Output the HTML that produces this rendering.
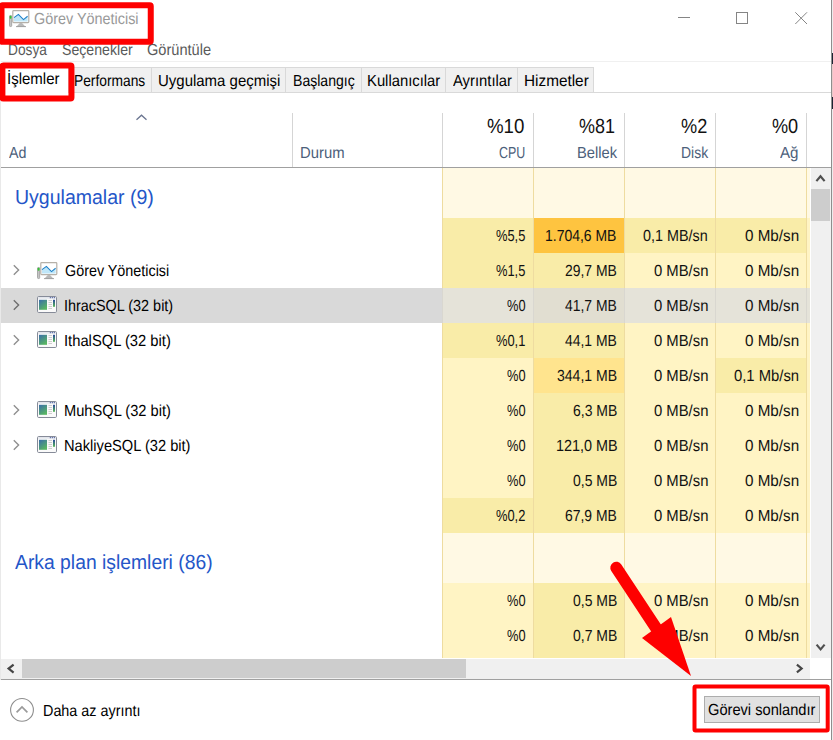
<!DOCTYPE html>
<html><head><meta charset="utf-8">
<style>
html,body{margin:0;padding:0;}
body{width:833px;height:740px;position:relative;overflow:hidden;background:#fff;font-family:"Liberation Sans",sans-serif;font-size:15px;color:#000;text-rendering:geometricPrecision;}
.abs{position:absolute;}
.t{position:absolute;white-space:nowrap;transform-origin:0 0;}
</style></head><body>
<div class="abs" style="left:831px;top:0;width:1px;height:740px;background:#8e8e8e;"></div>
<div class="abs" style="left:832px;top:0;width:1px;height:740px;background:#ececec;"></div>
<div class="abs" style="left:832px;top:53px;width:1px;height:11px;background:#1c2433;"></div>
<div class="abs" style="left:832px;top:64px;width:1px;height:33px;background:#e9c9c9;"></div>
<div class="abs" style="left:832px;top:97px;width:1px;height:12px;background:#1c2433;"></div>
<div class="abs" style="left:0;top:93px;width:1px;height:587px;background:#e9e9e9;"></div>

<svg class="abs" style="left:9px;top:10px;" width="21" height="18" viewBox="0 0 21 18">
<rect x="0.5" y="5.5" width="2.2" height="11" rx="0.8" fill="#c4c4c4" stroke="#9a9a9a" stroke-width="0.8"/>
<rect x="0.7" y="5.8" width="1.8" height="3" rx="0.8" fill="#35c435"/>
<rect x="3.8" y="0.6" width="16" height="12" rx="0.8" fill="#ffffff" stroke="#b5b0a8" stroke-width="1.2"/>
<path d="M5 7.600 L9.400 4.400 L14.500 9.600 L18.600 6.300 L18.600 11.400 L5 11.400 Z" fill="#bfe6f8"/>
<path d="M5 7.600 L9.400 4.400 L14.500 9.600 L18.600 6.300" fill="none" stroke="#1e80c8" stroke-width="1.1"/>
<path d="M10.800 13 L13 13 L16.500 16.800 L7.300 16.800 Z" fill="#b9b9b9"/>
<rect x="7" y="16.200" width="10" height="0.9" fill="#9a9a9a"/>
</svg>
<div class="t" id="title" style="left:34.28px;top:9px;font-size:16px;line-height:21px;transform:scaleX(0.8996);color:#999;">Görev Yöneticisi</div>
<svg class="abs" style="left:670px;top:0;" width="160" height="36" viewBox="0 0 160 36">
<path d="M8 17.500 H20" stroke="#858585" stroke-width="1" fill="none"/>
<rect x="66.500" y="12.500" width="11" height="11" stroke="#858585" stroke-width="1" fill="none"/>
<path d="M125.300 12.300 L137 24 M137 12.300 L125.300 24" stroke="#858585" stroke-width="1" fill="none"/>
</svg>
<div class="t" id="m1" style="left:8.00px;top:40px;font-size:16px;line-height:21px;transform:scaleX(0.8571);color:#5a5a5a;">Dosya</div>
<div class="t" id="m2" style="left:61.84px;top:40px;font-size:16px;line-height:21px;transform:scaleX(0.8833);color:#5a5a5a;">Seçenekler</div>
<div class="t" id="m3" style="left:147.42px;top:40px;font-size:16px;line-height:21px;transform:scaleX(0.9122);color:#5a5a5a;">Görüntüle</div>
<div class="abs" style="left:1px;top:61px;width:830px;height:1px;background:#f0f0f0;"></div>
<div class="abs" style="left:1px;top:92px;width:830px;height:1px;background:#d9d9d9;"></div>
<div class="abs" style="left:68px;top:67px;width:526px;height:25px;background:#f0f0f0;border:1px solid #d9d9d9;border-bottom:none;box-sizing:border-box;"></div>
<div class="abs" style="left:151px;top:68px;width:1px;height:24px;background:#d9d9d9;"></div>
<div class="abs" style="left:285px;top:68px;width:1px;height:24px;background:#d9d9d9;"></div>
<div class="abs" style="left:361px;top:68px;width:1px;height:24px;background:#d9d9d9;"></div>
<div class="abs" style="left:445px;top:68px;width:1px;height:24px;background:#d9d9d9;"></div>
<div class="abs" style="left:517px;top:68px;width:1px;height:24px;background:#d9d9d9;"></div>
<div class="abs" style="left:2px;top:65px;width:67px;height:28px;background:#fff;border:1px solid #d9d9d9;border-bottom:none;box-sizing:border-box;"></div>
<div class="t" id="tab1" style="left:7.48px;top:69px;font-size:16px;line-height:21px;transform:scaleX(0.9379);color:#000;">İşlemler</div>
<div class="t" id="tab2" style="left:74.00px;top:71px;font-size:16px;line-height:21px;transform:scaleX(0.8614);color:#000;">Performans</div>
<div class="t" id="tab3" style="left:157.56px;top:71px;font-size:16px;line-height:21px;transform:scaleX(0.9360);color:#000;">Uygulama geçmişi</div>
<div class="t" id="tab4" style="left:292.64px;top:71px;font-size:16px;line-height:21px;transform:scaleX(0.8786);color:#000;">Başlangıç</div>
<div class="t" id="tab5" style="left:366.84px;top:71px;font-size:16px;line-height:21px;transform:scaleX(0.9256);color:#000;">Kullanıcılar</div>
<div class="t" id="tab6" style="left:452.72px;top:71px;font-size:16px;line-height:21px;transform:scaleX(0.9255);color:#000;">Ayrıntılar</div>
<div class="t" id="tab7" style="left:523.84px;top:71px;font-size:16px;line-height:21px;transform:scaleX(0.9582);color:#000;">Hizmetler</div>
<div class="abs" style="left:1px;top:167px;width:830px;height:1px;background:#a0a0a0;"></div>
<div class="abs" style="left:292px;top:113px;width:1px;height:54px;background:#d5d5d5;"></div>
<div class="abs" style="left:442px;top:113px;width:1px;height:54px;background:#d5d5d5;"></div>
<div class="abs" style="left:533px;top:113px;width:1px;height:54px;background:#d5d5d5;"></div>
<div class="abs" style="left:624px;top:113px;width:1px;height:54px;background:#d5d5d5;"></div>
<div class="abs" style="left:715px;top:113px;width:1px;height:54px;background:#d5d5d5;"></div>
<div class="abs" style="left:806px;top:113px;width:1px;height:54px;background:#d5d5d5;"></div>
<svg class="abs" style="left:134px;top:113px;" width="16" height="10" viewBox="0 0 16 10"><path d="M2.500 6.800 L7.500 2.200 L12.500 6.800" fill="none" stroke="#6a7590" stroke-width="1.3"/></svg>
<div class="t" id="hAd" style="left:8.50px;top:143px;font-size:16px;line-height:21px;transform:scaleX(0.8917);color:#4c607a;">Ad</div>
<div class="t" id="hDurum" style="left:300.20px;top:143px;font-size:16px;line-height:21px;transform:scaleX(0.9275);color:#4c607a;">Durum</div>
<div class="t" id="hp0" style="left:487.14px;top:114px;font-size:20.4px;line-height:27px;transform:scaleX(0.9157);color:#111;">%10</div>
<div class="t" id="hl0" style="left:499.14px;top:143px;font-size:16px;line-height:21px;transform:scaleX(0.7769);color:#4c607a;">CPU</div>
<div class="t" id="hp1" style="left:578.64px;top:114px;font-size:20.4px;line-height:27px;transform:scaleX(0.8809);color:#111;">%81</div>
<div class="t" id="hl1" style="left:577.20px;top:143px;font-size:16px;line-height:21px;transform:scaleX(0.9179);color:#4c607a;">Bellek</div>
<div class="t" id="hp2" style="left:681.00px;top:114px;font-size:20.4px;line-height:27px;transform:scaleX(0.8904);color:#111;">%2</div>
<div class="t" id="hl2" style="left:681.00px;top:143px;font-size:16px;line-height:21px;transform:scaleX(0.8710);color:#4c607a;">Disk</div>
<div class="t" id="hp3" style="left:771.78px;top:114px;font-size:20.4px;line-height:27px;transform:scaleX(0.8877);color:#111;">%0</div>
<div class="t" id="hl3" style="left:780.28px;top:143px;font-size:16px;line-height:21px;transform:scaleX(0.9468);color:#4c607a;">Ağ</div>
<div class="abs" style="left:807px;top:168px;width:3px;height:490px;background:#FFF4C4;"></div>
<div class="abs" style="left:807px;top:168px;width:3px;height:50px;background:#FFF9E4;"></div>
<div class="abs" style="left:443px;top:168px;width:90px;height:50px;background:#FFF9E4;"></div>
<div class="abs" style="left:534px;top:168px;width:90px;height:50px;background:#FFF9E4;"></div>
<div class="abs" style="left:625px;top:168px;width:90px;height:50px;background:#FFF9E4;"></div>
<div class="abs" style="left:716px;top:168px;width:90px;height:50px;background:#FFF9E4;"></div>
<div class="abs" style="left:807px;top:533px;width:3px;height:50px;background:#FFF9E4;"></div>
<div class="abs" style="left:443px;top:533px;width:90px;height:50px;background:#FFF9E4;"></div>
<div class="abs" style="left:534px;top:533px;width:90px;height:50px;background:#FFF9E4;"></div>
<div class="abs" style="left:625px;top:533px;width:90px;height:50px;background:#FFF9E4;"></div>
<div class="abs" style="left:716px;top:533px;width:90px;height:50px;background:#FFF9E4;"></div>
<div class="abs" style="left:443px;top:653px;width:90px;height:5px;background:#FFF4C4;"></div>
<div class="abs" style="left:534px;top:653px;width:90px;height:5px;background:#F9ECA8;"></div>
<div class="abs" style="left:625px;top:653px;width:90px;height:5px;background:#FFF4C4;"></div>
<div class="abs" style="left:716px;top:653px;width:90px;height:5px;background:#FFF4C4;"></div>
<div class="abs" style="left:442px;top:168px;width:1px;height:490px;background:#eedca0;"></div>
<div class="abs" style="left:533px;top:168px;width:1px;height:490px;background:#eedca0;"></div>
<div class="abs" style="left:624px;top:168px;width:1px;height:490px;background:#eedca0;"></div>
<div class="abs" style="left:715px;top:168px;width:1px;height:490px;background:#eedca0;"></div>
<div class="abs" style="left:806px;top:168px;width:1px;height:490px;background:#eedca0;"></div>
<div class="abs" style="left:443px;top:218px;width:90px;height:35px;background:#F9ECA8;"></div>
<div class="abs" style="left:534px;top:218px;width:90px;height:35px;background:#FEC440;"></div>
<div class="abs" style="left:625px;top:218px;width:90px;height:35px;background:#F9ECA8;"></div>
<div class="abs" style="left:716px;top:218px;width:90px;height:35px;background:#F9ECA8;"></div>
<div class="t" style="left:496.00px;top:226px;font-size:16px;line-height:21px;transform:scaleX(0.8044);color:#111;">%5,5</div>
<div class="t" style="left:545.12px;top:226px;font-size:16px;line-height:21px;transform:scaleX(0.8718);color:#111;">1.704,6 MB</div>
<div class="t" style="left:643.14px;top:226px;font-size:16px;line-height:21px;transform:scaleX(0.8978);color:#111;">0,1 MB/sn</div>
<div class="t" style="left:745.14px;top:226px;font-size:16px;line-height:21px;transform:scaleX(0.9509);color:#111;">0 Mb/sn</div>
<div class="abs" style="left:443px;top:253px;width:90px;height:35px;background:#F9ECA8;"></div>
<div class="abs" style="left:534px;top:253px;width:90px;height:35px;background:#F9ECA8;"></div>
<div class="abs" style="left:625px;top:253px;width:90px;height:35px;background:#FFF4C4;"></div>
<div class="abs" style="left:716px;top:253px;width:90px;height:35px;background:#FFF4C4;"></div>
<div class="t" style="left:496.00px;top:261px;font-size:16px;line-height:21px;transform:scaleX(0.8044);color:#111;">%1,5</div>
<div class="t" style="left:564.64px;top:261px;font-size:16px;line-height:21px;transform:scaleX(0.8698);color:#111;">29,7 MB</div>
<div class="t" style="left:654.14px;top:261px;font-size:16px;line-height:21px;transform:scaleX(0.9266);color:#111;">0 MB/sn</div>
<div class="t" style="left:745.14px;top:261px;font-size:16px;line-height:21px;transform:scaleX(0.9509);color:#111;">0 Mb/sn</div>
<svg class="abs" style="left:12px;top:263.8px;" width="9" height="12" viewBox="0 0 9 12"><path d="M1.800 1.300 L6.600 6 L1.800 10.700" fill="none" stroke="#8f8f8f" stroke-width="1.400"/></svg>
<svg class="abs" style="left:36.5px;top:262px;" width="21" height="18" viewBox="0 0 21 18">
<rect x="0.5" y="5.5" width="2.2" height="11" rx="0.8" fill="#c4c4c4" stroke="#9a9a9a" stroke-width="0.8"/>
<rect x="0.7" y="5.8" width="1.8" height="3" rx="0.8" fill="#35c435"/>
<rect x="3.8" y="0.6" width="16" height="12" rx="0.8" fill="#ffffff" stroke="#b5b0a8" stroke-width="1.2"/>
<path d="M5 7.600 L9.400 4.400 L14.500 9.600 L18.600 6.300 L18.600 11.400 L5 11.400 Z" fill="#bfe6f8"/>
<path d="M5 7.600 L9.400 4.400 L14.500 9.600 L18.600 6.300" fill="none" stroke="#1e80c8" stroke-width="1.1"/>
<path d="M10.800 13 L13 13 L16.500 16.800 L7.300 16.800 Z" fill="#b9b9b9"/>
<rect x="7" y="16.200" width="10" height="0.9" fill="#9a9a9a"/>
</svg>
<div class="t" style="left:64.56px;top:261px;font-size:16px;line-height:21px;transform:scaleX(0.8967);color:#000;">Görev Yöneticisi</div>
<div class="abs" style="left:1px;top:288px;width:441px;height:35px;background:#d9d9d9;"></div>
<div class="abs" style="left:442px;top:288px;width:368px;height:35px;background:#e5e3d9;"></div>
<div class="abs" style="left:534px;top:288px;width:90px;height:35px;background:#e1ded1;"></div>
<div class="abs" style="left:442px;top:288px;width:1px;height:35px;background:#d9d7d0;"></div>
<div class="abs" style="left:533px;top:288px;width:1px;height:35px;background:#d9d7d0;"></div>
<div class="abs" style="left:624px;top:288px;width:1px;height:35px;background:#d9d7d0;"></div>
<div class="abs" style="left:715px;top:288px;width:1px;height:35px;background:#d9d7d0;"></div>
<div class="abs" style="left:806px;top:288px;width:1px;height:35px;background:#d9d7d0;"></div>
<div class="t" style="left:506.86px;top:296px;font-size:16px;line-height:21px;transform:scaleX(0.8000);color:#111;">%0</div>
<div class="t" style="left:564.64px;top:296px;font-size:16px;line-height:21px;transform:scaleX(0.8698);color:#111;">41,7 MB</div>
<div class="t" style="left:654.14px;top:296px;font-size:16px;line-height:21px;transform:scaleX(0.9266);color:#111;">0 MB/sn</div>
<div class="t" style="left:745.14px;top:296px;font-size:16px;line-height:21px;transform:scaleX(0.9509);color:#111;">0 Mb/sn</div>
<svg class="abs" style="left:12px;top:298.8px;" width="9" height="12" viewBox="0 0 9 12"><path d="M1.800 1.300 L6.600 6 L1.800 10.700" fill="none" stroke="#6e6e6e" stroke-width="1.400"/></svg>
<svg class="abs" style="left:37px;top:296px;" width="20" height="17" viewBox="0 0 20 17">
<defs><linearGradient id="ga1" x1="0" y1="0" x2="0.6" y2="1"><stop offset="0" stop-color="#3a6cab"/><stop offset="1" stop-color="#58b562"/></linearGradient>
<linearGradient id="gb1" x1="0" y1="0" x2="0" y2="1"><stop offset="0" stop-color="#27479c"/><stop offset="1" stop-color="#58b858"/></linearGradient></defs>
<rect x="0.5" y="0.5" width="19" height="16" rx="1.2" fill="#fafafa" stroke="#868b98" stroke-width="1"/>
<rect x="1.200" y="1.100" width="17.600" height="1.500" fill="#dfe3ea"/>
<rect x="12.800" y="1.100" width="1.100" height="1.100" fill="#4a5c9c"/><rect x="14.800" y="1.100" width="1.100" height="1.100" fill="#4a5c9c"/><rect x="16.800" y="1.100" width="1.100" height="1.100" fill="#4a5c9c"/>
<rect x="2" y="3.800" width="8" height="10" fill="url(#ga1)"/>
<rect x="11.500" y="4.200" width="3.500" height="0.8" fill="#c4c4c4"/><rect x="11.500" y="6.200" width="3.500" height="0.8" fill="#c4c4c4"/><rect x="11.500" y="8.200" width="3.500" height="0.8" fill="#c4c4c4"/><rect x="11.500" y="10.200" width="3.500" height="0.8" fill="#c4c4c4"/><rect x="11.500" y="12.200" width="3.500" height="0.8" fill="#c4c4c4"/>
<rect x="16" y="3.800" width="2" height="7" fill="url(#gb1)"/>
</svg>
<div class="t" style="left:64.08px;top:296px;font-size:16px;line-height:21px;transform:scaleX(0.9001);color:#000;">IhracSQL (32 bit)</div>
<div class="abs" style="left:443px;top:323px;width:90px;height:35px;background:#F9ECA8;"></div>
<div class="abs" style="left:534px;top:323px;width:90px;height:35px;background:#F9ECA8;"></div>
<div class="abs" style="left:625px;top:323px;width:90px;height:35px;background:#FFF4C4;"></div>
<div class="abs" style="left:716px;top:323px;width:90px;height:35px;background:#FFF4C4;"></div>
<div class="t" style="left:496.00px;top:331px;font-size:16px;line-height:21px;transform:scaleX(0.8044);color:#111;">%0,1</div>
<div class="t" style="left:564.64px;top:331px;font-size:16px;line-height:21px;transform:scaleX(0.8698);color:#111;">44,1 MB</div>
<div class="t" style="left:654.14px;top:331px;font-size:16px;line-height:21px;transform:scaleX(0.9266);color:#111;">0 MB/sn</div>
<div class="t" style="left:745.14px;top:331px;font-size:16px;line-height:21px;transform:scaleX(0.9509);color:#111;">0 Mb/sn</div>
<svg class="abs" style="left:12px;top:333.8px;" width="9" height="12" viewBox="0 0 9 12"><path d="M1.800 1.300 L6.600 6 L1.800 10.700" fill="none" stroke="#8f8f8f" stroke-width="1.400"/></svg>
<svg class="abs" style="left:37px;top:331px;" width="20" height="17" viewBox="0 0 20 17">
<defs><linearGradient id="ga2" x1="0" y1="0" x2="0.6" y2="1"><stop offset="0" stop-color="#3a6cab"/><stop offset="1" stop-color="#58b562"/></linearGradient>
<linearGradient id="gb2" x1="0" y1="0" x2="0" y2="1"><stop offset="0" stop-color="#27479c"/><stop offset="1" stop-color="#58b858"/></linearGradient></defs>
<rect x="0.5" y="0.5" width="19" height="16" rx="1.2" fill="#fafafa" stroke="#868b98" stroke-width="1"/>
<rect x="1.200" y="1.100" width="17.600" height="1.500" fill="#dfe3ea"/>
<rect x="12.800" y="1.100" width="1.100" height="1.100" fill="#4a5c9c"/><rect x="14.800" y="1.100" width="1.100" height="1.100" fill="#4a5c9c"/><rect x="16.800" y="1.100" width="1.100" height="1.100" fill="#4a5c9c"/>
<rect x="2" y="3.800" width="8" height="10" fill="url(#ga2)"/>
<rect x="11.500" y="4.200" width="3.500" height="0.8" fill="#c4c4c4"/><rect x="11.500" y="6.200" width="3.500" height="0.8" fill="#c4c4c4"/><rect x="11.500" y="8.200" width="3.500" height="0.8" fill="#c4c4c4"/><rect x="11.500" y="10.200" width="3.500" height="0.8" fill="#c4c4c4"/><rect x="11.500" y="12.200" width="3.500" height="0.8" fill="#c4c4c4"/>
<rect x="16" y="3.800" width="2" height="7" fill="url(#gb2)"/>
</svg>
<div class="t" style="left:64.08px;top:331px;font-size:16px;line-height:21px;transform:scaleX(0.9219);color:#000;">IthalSQL (32 bit)</div>
<div class="abs" style="left:443px;top:358px;width:90px;height:35px;background:#FFF4C4;"></div>
<div class="abs" style="left:534px;top:358px;width:90px;height:35px;background:#FFE48E;"></div>
<div class="abs" style="left:625px;top:358px;width:90px;height:35px;background:#FFF4C4;"></div>
<div class="abs" style="left:716px;top:358px;width:90px;height:35px;background:#F9ECA8;"></div>
<div class="t" style="left:506.86px;top:366px;font-size:16px;line-height:21px;transform:scaleX(0.8000);color:#111;">%0</div>
<div class="t" style="left:556.50px;top:366px;font-size:16px;line-height:21px;transform:scaleX(0.8759);color:#111;">344,1 MB</div>
<div class="t" style="left:654.14px;top:366px;font-size:16px;line-height:21px;transform:scaleX(0.9266);color:#111;">0 MB/sn</div>
<div class="t" style="left:734.14px;top:366px;font-size:16px;line-height:21px;transform:scaleX(0.9264);color:#111;">0,1 Mb/sn</div>
<div class="abs" style="left:443px;top:393px;width:90px;height:35px;background:#FFF4C4;"></div>
<div class="abs" style="left:534px;top:393px;width:90px;height:35px;background:#F9ECA8;"></div>
<div class="abs" style="left:625px;top:393px;width:90px;height:35px;background:#FFF4C4;"></div>
<div class="abs" style="left:716px;top:393px;width:90px;height:35px;background:#FFF4C4;"></div>
<div class="t" style="left:506.86px;top:401px;font-size:16px;line-height:21px;transform:scaleX(0.8000);color:#111;">%0</div>
<div class="t" style="left:573.00px;top:401px;font-size:16px;line-height:21px;transform:scaleX(0.8729);color:#111;">6,3 MB</div>
<div class="t" style="left:654.14px;top:401px;font-size:16px;line-height:21px;transform:scaleX(0.9266);color:#111;">0 MB/sn</div>
<div class="t" style="left:745.14px;top:401px;font-size:16px;line-height:21px;transform:scaleX(0.9509);color:#111;">0 Mb/sn</div>
<svg class="abs" style="left:12px;top:403.8px;" width="9" height="12" viewBox="0 0 9 12"><path d="M1.800 1.300 L6.600 6 L1.800 10.700" fill="none" stroke="#8f8f8f" stroke-width="1.400"/></svg>
<svg class="abs" style="left:37px;top:401px;" width="20" height="17" viewBox="0 0 20 17">
<defs><linearGradient id="ga3" x1="0" y1="0" x2="0.6" y2="1"><stop offset="0" stop-color="#3a6cab"/><stop offset="1" stop-color="#58b562"/></linearGradient>
<linearGradient id="gb3" x1="0" y1="0" x2="0" y2="1"><stop offset="0" stop-color="#27479c"/><stop offset="1" stop-color="#58b858"/></linearGradient></defs>
<rect x="0.5" y="0.5" width="19" height="16" rx="1.2" fill="#fafafa" stroke="#868b98" stroke-width="1"/>
<rect x="1.200" y="1.100" width="17.600" height="1.500" fill="#dfe3ea"/>
<rect x="12.800" y="1.100" width="1.100" height="1.100" fill="#4a5c9c"/><rect x="14.800" y="1.100" width="1.100" height="1.100" fill="#4a5c9c"/><rect x="16.800" y="1.100" width="1.100" height="1.100" fill="#4a5c9c"/>
<rect x="2" y="3.800" width="8" height="10" fill="url(#ga3)"/>
<rect x="11.500" y="4.200" width="3.500" height="0.8" fill="#c4c4c4"/><rect x="11.500" y="6.200" width="3.500" height="0.8" fill="#c4c4c4"/><rect x="11.500" y="8.200" width="3.500" height="0.8" fill="#c4c4c4"/><rect x="11.500" y="10.200" width="3.500" height="0.8" fill="#c4c4c4"/><rect x="11.500" y="12.200" width="3.500" height="0.8" fill="#c4c4c4"/>
<rect x="16" y="3.800" width="2" height="7" fill="url(#gb3)"/>
</svg>
<div class="t" style="left:64.08px;top:401px;font-size:16px;line-height:21px;transform:scaleX(0.9149);color:#000;">MuhSQL (32 bit)</div>
<div class="abs" style="left:443px;top:428px;width:90px;height:35px;background:#FFF4C4;"></div>
<div class="abs" style="left:534px;top:428px;width:90px;height:35px;background:#F9ECA8;"></div>
<div class="abs" style="left:625px;top:428px;width:90px;height:35px;background:#FFF4C4;"></div>
<div class="abs" style="left:716px;top:428px;width:90px;height:35px;background:#FFF4C4;"></div>
<div class="t" style="left:506.86px;top:436px;font-size:16px;line-height:21px;transform:scaleX(0.8000);color:#111;">%0</div>
<div class="t" style="left:555.70px;top:436px;font-size:16px;line-height:21px;transform:scaleX(0.8993);color:#111;">121,0 MB</div>
<div class="t" style="left:654.14px;top:436px;font-size:16px;line-height:21px;transform:scaleX(0.9266);color:#111;">0 MB/sn</div>
<div class="t" style="left:745.14px;top:436px;font-size:16px;line-height:21px;transform:scaleX(0.9509);color:#111;">0 Mb/sn</div>
<svg class="abs" style="left:12px;top:438.8px;" width="9" height="12" viewBox="0 0 9 12"><path d="M1.800 1.300 L6.600 6 L1.800 10.700" fill="none" stroke="#8f8f8f" stroke-width="1.400"/></svg>
<svg class="abs" style="left:37px;top:436px;" width="20" height="17" viewBox="0 0 20 17">
<defs><linearGradient id="ga4" x1="0" y1="0" x2="0.6" y2="1"><stop offset="0" stop-color="#3a6cab"/><stop offset="1" stop-color="#58b562"/></linearGradient>
<linearGradient id="gb4" x1="0" y1="0" x2="0" y2="1"><stop offset="0" stop-color="#27479c"/><stop offset="1" stop-color="#58b858"/></linearGradient></defs>
<rect x="0.5" y="0.5" width="19" height="16" rx="1.2" fill="#fafafa" stroke="#868b98" stroke-width="1"/>
<rect x="1.200" y="1.100" width="17.600" height="1.500" fill="#dfe3ea"/>
<rect x="12.800" y="1.100" width="1.100" height="1.100" fill="#4a5c9c"/><rect x="14.800" y="1.100" width="1.100" height="1.100" fill="#4a5c9c"/><rect x="16.800" y="1.100" width="1.100" height="1.100" fill="#4a5c9c"/>
<rect x="2" y="3.800" width="8" height="10" fill="url(#ga4)"/>
<rect x="11.500" y="4.200" width="3.500" height="0.8" fill="#c4c4c4"/><rect x="11.500" y="6.200" width="3.500" height="0.8" fill="#c4c4c4"/><rect x="11.500" y="8.200" width="3.500" height="0.8" fill="#c4c4c4"/><rect x="11.500" y="10.200" width="3.500" height="0.8" fill="#c4c4c4"/><rect x="11.500" y="12.200" width="3.500" height="0.8" fill="#c4c4c4"/>
<rect x="16" y="3.800" width="2" height="7" fill="url(#gb4)"/>
</svg>
<div class="t" style="left:64.08px;top:436px;font-size:16px;line-height:21px;transform:scaleX(0.9157);color:#000;">NakliyeSQL (32 bit)</div>
<div class="abs" style="left:443px;top:463px;width:90px;height:35px;background:#FFF4C4;"></div>
<div class="abs" style="left:534px;top:463px;width:90px;height:35px;background:#F9ECA8;"></div>
<div class="abs" style="left:625px;top:463px;width:90px;height:35px;background:#FFF4C4;"></div>
<div class="abs" style="left:716px;top:463px;width:90px;height:35px;background:#FFF4C4;"></div>
<div class="t" style="left:506.86px;top:471px;font-size:16px;line-height:21px;transform:scaleX(0.8000);color:#111;">%0</div>
<div class="t" style="left:573.00px;top:471px;font-size:16px;line-height:21px;transform:scaleX(0.8729);color:#111;">0,5 MB</div>
<div class="t" style="left:654.14px;top:471px;font-size:16px;line-height:21px;transform:scaleX(0.9266);color:#111;">0 MB/sn</div>
<div class="t" style="left:745.14px;top:471px;font-size:16px;line-height:21px;transform:scaleX(0.9509);color:#111;">0 Mb/sn</div>
<div class="abs" style="left:443px;top:498px;width:90px;height:35px;background:#F9ECA8;"></div>
<div class="abs" style="left:534px;top:498px;width:90px;height:35px;background:#F9ECA8;"></div>
<div class="abs" style="left:625px;top:498px;width:90px;height:35px;background:#FFF4C4;"></div>
<div class="abs" style="left:716px;top:498px;width:90px;height:35px;background:#FFF4C4;"></div>
<div class="t" style="left:496.00px;top:506px;font-size:16px;line-height:21px;transform:scaleX(0.8044);color:#111;">%0,2</div>
<div class="t" style="left:564.64px;top:506px;font-size:16px;line-height:21px;transform:scaleX(0.8698);color:#111;">67,9 MB</div>
<div class="t" style="left:654.14px;top:506px;font-size:16px;line-height:21px;transform:scaleX(0.9266);color:#111;">0 MB/sn</div>
<div class="t" style="left:745.14px;top:506px;font-size:16px;line-height:21px;transform:scaleX(0.9509);color:#111;">0 Mb/sn</div>
<div class="abs" style="left:443px;top:583px;width:90px;height:35px;background:#FFF4C4;"></div>
<div class="abs" style="left:534px;top:583px;width:90px;height:35px;background:#F9ECA8;"></div>
<div class="abs" style="left:625px;top:583px;width:90px;height:35px;background:#FFF4C4;"></div>
<div class="abs" style="left:716px;top:583px;width:90px;height:35px;background:#FFF4C4;"></div>
<div class="t" style="left:506.86px;top:591px;font-size:16px;line-height:21px;transform:scaleX(0.8000);color:#111;">%0</div>
<div class="t" style="left:573.00px;top:591px;font-size:16px;line-height:21px;transform:scaleX(0.8729);color:#111;">0,5 MB</div>
<div class="t" style="left:654.14px;top:591px;font-size:16px;line-height:21px;transform:scaleX(0.9266);color:#111;">0 MB/sn</div>
<div class="t" style="left:745.14px;top:591px;font-size:16px;line-height:21px;transform:scaleX(0.9509);color:#111;">0 Mb/sn</div>
<div class="abs" style="left:443px;top:618px;width:90px;height:35px;background:#FFF4C4;"></div>
<div class="abs" style="left:534px;top:618px;width:90px;height:35px;background:#F9ECA8;"></div>
<div class="abs" style="left:625px;top:618px;width:90px;height:35px;background:#FFF4C4;"></div>
<div class="abs" style="left:716px;top:618px;width:90px;height:35px;background:#FFF4C4;"></div>
<div class="t" style="left:506.86px;top:626px;font-size:16px;line-height:21px;transform:scaleX(0.8000);color:#111;">%0</div>
<div class="t" style="left:573.00px;top:626px;font-size:16px;line-height:21px;transform:scaleX(0.8729);color:#111;">0,7 MB</div>
<div class="t" style="left:654.14px;top:626px;font-size:16px;line-height:21px;transform:scaleX(0.9266);color:#111;">0 MB/sn</div>
<div class="t" style="left:745.14px;top:626px;font-size:16px;line-height:21px;transform:scaleX(0.9509);color:#111;">0 Mb/sn</div>
<div class="t" id="gt1" style="left:14.56px;top:185px;font-size:20.4px;line-height:27px;transform:scaleX(0.9572);color:#2456c8;">Uygulamalar (9)</div>
<div class="t" id="gt2" style="left:15.36px;top:550px;font-size:20.4px;line-height:27px;transform:scaleX(0.9477);color:#2456c8;">Arka plan işlemleri (86)</div>
<div class="abs" style="left:811px;top:168px;width:20px;height:490px;background:#f0f0f0;"></div>
<div class="abs" style="left:811px;top:189px;width:19px;height:32px;background:#cdcdcd;"></div>
<svg class="abs" style="left:0;top:0;" width="833" height="740" viewBox="0 0 833 740"><g fill="none" stroke="#505050" stroke-width="2.2">
<path d="M816.400 181.100 L820.500 176.300 L824.600 181.100"/>
<path d="M816.600 644.600 L820.600 649.400 L824.600 644.600"/>
</g></svg>

<div class="abs" style="left:1px;top:659px;width:809px;height:20px;background:#f0f0f0;"></div>
<div class="abs" style="left:22px;top:659px;width:444px;height:19px;background:#cdcdcd;"></div>
<svg class="abs" style="left:0;top:0;" width="833" height="740" viewBox="0 0 833 740"><g fill="none" stroke="#454545" stroke-width="2.2">
<path d="M13.600 664.600 L8.600 668.600 L13.600 672.600"/>
<path d="M796.900 664.700 L801.600 668.500 L796.900 672.300"/>
</g></svg>
<div class="abs" style="left:1px;top:679px;width:830px;height:1px;background:#a0a0a0;"></div>

<svg class="abs" style="left:9px;top:697px;" width="26" height="26" viewBox="0 0 26 26"><circle cx="13" cy="12.900" r="11.400" fill="#fff" stroke="#8e8e8e" stroke-width="1.100"/><path d="M7.600 15.400 L13 10 L18.400 15.400" fill="none" stroke="#9a9a9a" stroke-width="1.700"/></svg>
<div class="t" id="less" style="left:43.36px;top:701px;font-size:16px;line-height:21px;transform:scaleX(0.8981);color:#000;">Daha az ayrıntı</div>
<div class="abs" style="left:704px;top:696px;width:116px;height:27px;box-sizing:border-box;background:#e1e1e1;border:1px solid #adadad;"></div>
<div class="t" id="btn" style="left:708.36px;top:700px;font-size:16px;line-height:21px;transform:scaleX(0.9147);color:#000;">Görevi sonlandır</div>
<svg class="abs" style="left:0;top:0;" width="833" height="740" viewBox="0 0 833 740">
<rect x="1.500" y="5.300" width="149.250" height="36.500" fill="none" stroke="#fe0000" stroke-width="6" rx="1"/>
<rect x="2.400" y="65.400" width="69.050" height="33.200" fill="none" stroke="#fe0000" stroke-width="6" rx="1"/>
<rect x="694.500" y="686.500" width="133.200" height="43.900" fill="none" stroke="#fe0000" stroke-width="4" rx="1"/>
<path d="M616.300 567.700 L660 634" stroke="#fe0000" stroke-width="12" stroke-linecap="round" fill="none"/>
<path d="M642 638 L671 617 L691 676 Z" fill="#fe0000"/>
</svg>
</body></html>
